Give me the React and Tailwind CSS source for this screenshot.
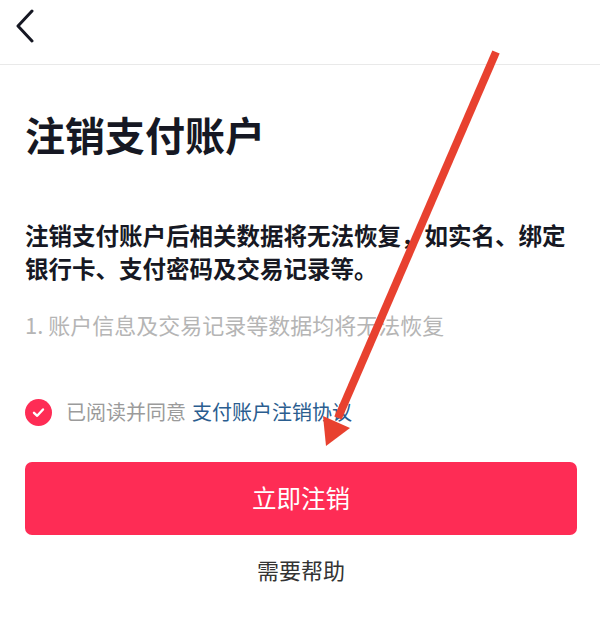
import React from "react";

export default function App() {
  const font = { fontFamily: '"Noto Sans CJK SC", "Noto Sans", sans-serif' };
  return (
    <div className="relative w-[600px] h-[643px] bg-white overflow-hidden" style={font}>
      <div className="h-[65px] border-b border-[#e9e9e9] flex items-start pt-[9px] pl-[14px]">
        <svg width="22" height="34" viewBox="0 0 22 34" fill="none">
          <path d="M18 2 L4 17 L18 32" stroke="#161823" strokeWidth="3" strokeLinecap="round" strokeLinejoin="round" />
        </svg>
      </div>
      <div className="pl-[25px] pr-[23px] flex flex-col">
        <h1 className="mt-[45px] text-[40px] leading-[48px] font-bold text-[#161823]">注销支付账户</h1>
        <p className="mt-[61px] text-[23.5px] leading-[33px] font-bold text-[#161823] whitespace-nowrap">
          注销支付账户后相关数据将无法恢复，如实名、绑定
          <br />
          银行卡、支付密码及交易记录等。
        </p>
        <p className="mt-[24px] text-[22px] leading-[30px] text-[#b5b5b5]">1. 账户信息及交易记录等数据均将无法恢复</p>
        <div className="mt-[59px] h-[28px] flex items-center">
          <div className="w-[27px] h-[27px] rounded-full bg-[#fe2c55] flex items-center justify-center">
            <svg width="15" height="15" viewBox="0 0 15 15" fill="none">
              <path d="M3 7.8 L6.2 10.8 L12 4.5" stroke="white" strokeWidth="2.4" strokeLinecap="round" strokeLinejoin="round" />
            </svg>
          </div>
          <span className="ml-[14px] text-[20px] leading-[28px] text-[#9b9b9b]">已阅读并同意</span>
          <span className="ml-[6px] text-[20px] leading-[28px] text-[#2a5d8f]">支付账户注销协议</span>
        </div>
        <button className="mt-[36px] h-[73px] w-full rounded-[7px] bg-[#fe2c55] text-white text-[24.5px] flex items-center justify-center">
          立即注销
        </button>
        <div className="mt-[19px] text-center text-[22px] leading-[30px] text-[#333333]">需要帮助</div>
      </div>
      <svg className="absolute inset-0 pointer-events-none" width="600" height="643" viewBox="0 0 600 643">
        <line x1="496" y1="52" x2="338" y2="418" stroke="#e8412f" strokeWidth="8" />
        <polygon points="326,446 323,416 350,428" fill="#e8412f" />
      </svg>
    </div>
  );
}
